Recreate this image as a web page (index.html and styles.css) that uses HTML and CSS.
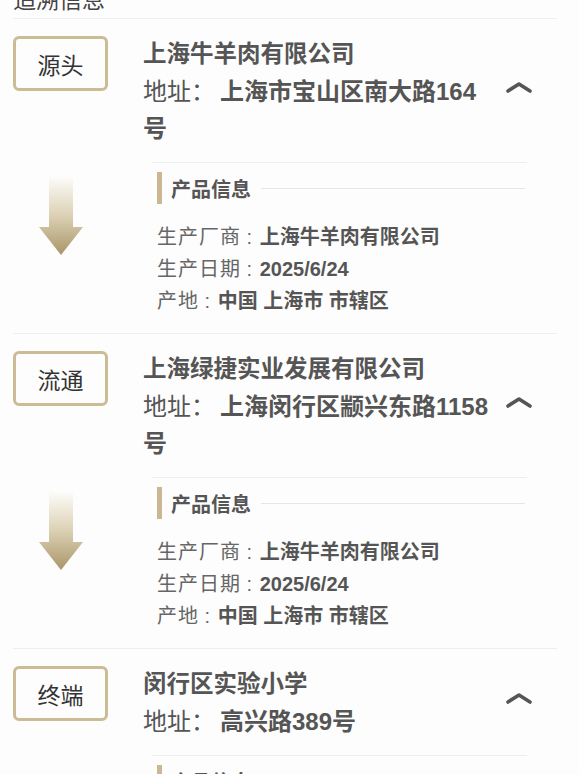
FILE: index.html
```html
<!DOCTYPE html>
<html>
	<head>
		<meta charset="utf-8">
		<title>追溯信息</title>
		<link rel="stylesheet" href="styles.css">
	</head>
	<body>
		<div class="title">追溯信息</div>
		<div class="trace-list">

			<div class="node">
				<div class="node-head">
					<div class="tag">源头</div>
					<div class="node-info">
						<div class="name">上海牛羊肉有限公司</div>
						<div class="addr">地址：<b class="addr-value">上海市宝山区南大路164号</b></div>
					</div>
					<svg class="toggle" width="26" height="12" viewBox="0 0 26 12"><polyline points="2,10 13,3 24,10" fill="none" stroke="#555" stroke-width="3.6" stroke-linecap="round" stroke-linejoin="round"/></svg>
				</div>
				<div class="node-body">
					<div class="arrow-col">
						<svg width="44" height="81" viewBox="0 0 44 81"><defs><linearGradient id="g1" x1="0" y1="0" x2="0" y2="1"><stop offset="0" stop-color="#ffffff"/><stop offset="0.5" stop-color="#ddd2b6"/><stop offset="1" stop-color="#a99668"/></linearGradient></defs><polygon points="10,0 34,0 34,53 44,53 22,81 0,53 10,53" fill="url(#g1)"/></svg>
					</div>
					<div class="product">
						<div class="product-title"><span>产品信息</span></div>
						<div class="row"><span class="label">生产厂商</span> : <b>上海牛羊肉有限公司</b></div>
						<div class="row"><span class="label">生产日期</span> : <b>2025/6/24</b></div>
						<div class="row"><span class="label">产地</span> : <b>中国 上海市 市辖区</b></div>
					</div>
				</div>
			</div>

			<div class="node">
				<div class="node-head">
					<div class="tag">流通</div>
					<div class="node-info">
						<div class="name">上海绿捷实业发展有限公司</div>
						<div class="addr">地址：<b class="addr-value">上海闵行区颛兴东路1158号</b></div>
					</div>
					<svg class="toggle" width="26" height="12" viewBox="0 0 26 12"><polyline points="2,10 13,3 24,10" fill="none" stroke="#555" stroke-width="3.6" stroke-linecap="round" stroke-linejoin="round"/></svg>
				</div>
				<div class="node-body">
					<div class="arrow-col">
						<svg width="44" height="81" viewBox="0 0 44 81"><defs><linearGradient id="g2" x1="0" y1="0" x2="0" y2="1"><stop offset="0" stop-color="#ffffff"/><stop offset="0.5" stop-color="#ddd2b6"/><stop offset="1" stop-color="#a99668"/></linearGradient></defs><polygon points="10,0 34,0 34,53 44,53 22,81 0,53 10,53" fill="url(#g2)"/></svg>
					</div>
					<div class="product">
						<div class="product-title"><span>产品信息</span></div>
						<div class="row"><span class="label">生产厂商</span> : <b>上海牛羊肉有限公司</b></div>
						<div class="row"><span class="label">生产日期</span> : <b>2025/6/24</b></div>
						<div class="row"><span class="label">产地</span> : <b>中国 上海市 市辖区</b></div>
					</div>
				</div>
			</div>

			<div class="node">
				<div class="node-head">
					<div class="tag">终端</div>
					<div class="node-info">
						<div class="name">闵行区实验小学</div>
						<div class="addr">地址：<b class="addr-value">高兴路389号</b></div>
					</div>
					<svg class="toggle" width="26" height="12" viewBox="0 0 26 12"><polyline points="2,10 13,3 24,10" fill="none" stroke="#555" stroke-width="3.6" stroke-linecap="round" stroke-linejoin="round"/></svg>
				</div>
				<div class="node-body">
					<div class="arrow-col"></div>
					<div class="product">
						<div class="product-title"><span>产品信息</span></div>
						<div class="row"><span class="label">生产厂商</span> : <b>上海牛羊肉有限公司</b></div>
					</div>
				</div>
			</div>

		</div>
	</body>
</html>
```

FILE: styles.css
```css
body{
	margin: 0;
	background: #fdfdfd;
	font-family: "Liberation Sans", "Noto Sans CJK SC", sans-serif;
	color: #555;
	overflow: hidden;
}
.title{
	margin: -18px 22px 0 13px;
	line-height: 36px;
	font-size: 23px;
	color: #444;
	border-bottom: 1px solid #eeeeee;
}
.trace-list{
	margin: 0 22px 0 13px;
}
.node{
	border-bottom: 1px solid #eeeeee;
}
.node-head{
	display: flex;
	align-items: flex-start;
	padding-top: 17px;
}
.tag{
	flex: none;
	width: 95px;
	height: 55px;
	box-sizing: border-box;
	border: 3px solid #cbbc96;
	border-radius: 6px;
	display: flex;
	align-items: center;
	justify-content: center;
	font-size: 23px;
	color: #333;
}
.node-info{
	flex: none;
	width: 352px;
	margin-left: 35px;
	line-height: 37px;
}
.name{
	font-size: 23.5px;
	font-weight: bold;
	color: #555;
}
.addr{
	font-size: 24px;
	color: #555;
}
.addr-value{
	margin-left: 5px;
}
.toggle{
	flex: none;
	align-self: center;
	margin-left: 11px;
	margin-bottom: 10px;
}
.node-body{
	display: flex;
	margin-top: 15px;
}
.arrow-col{
	flex: none;
	width: 95px;
	display: flex;
	justify-content: center;
	align-items: flex-start;
	padding-top: 12px;
}
.product{
	flex: none;
	width: 368px;
	margin-left: 44px;
	border-top: 1px solid #eeeeee;
	padding: 9px 2px 16px 5px;
}
.product-title{
	display: flex;
	align-items: center;
	height: 32px;
	border-left: 5px solid #cbb892;
	padding-left: 9px;
	font-size: 20px;
	font-weight: bold;
	color: #555;
	margin-bottom: 17px;
}
.product-title::after{
	content: "";
	flex: 1;
	height: 1px;
	background: #e6e6e6;
	margin-left: 10px;
}
.row{
	font-size: 20px;
	line-height: 32px;
	color: #666;
	white-space: nowrap;
}
.label{
	letter-spacing: 1px;
}
.row b{
	margin-left: 2px;
	color: #555;
}
```
